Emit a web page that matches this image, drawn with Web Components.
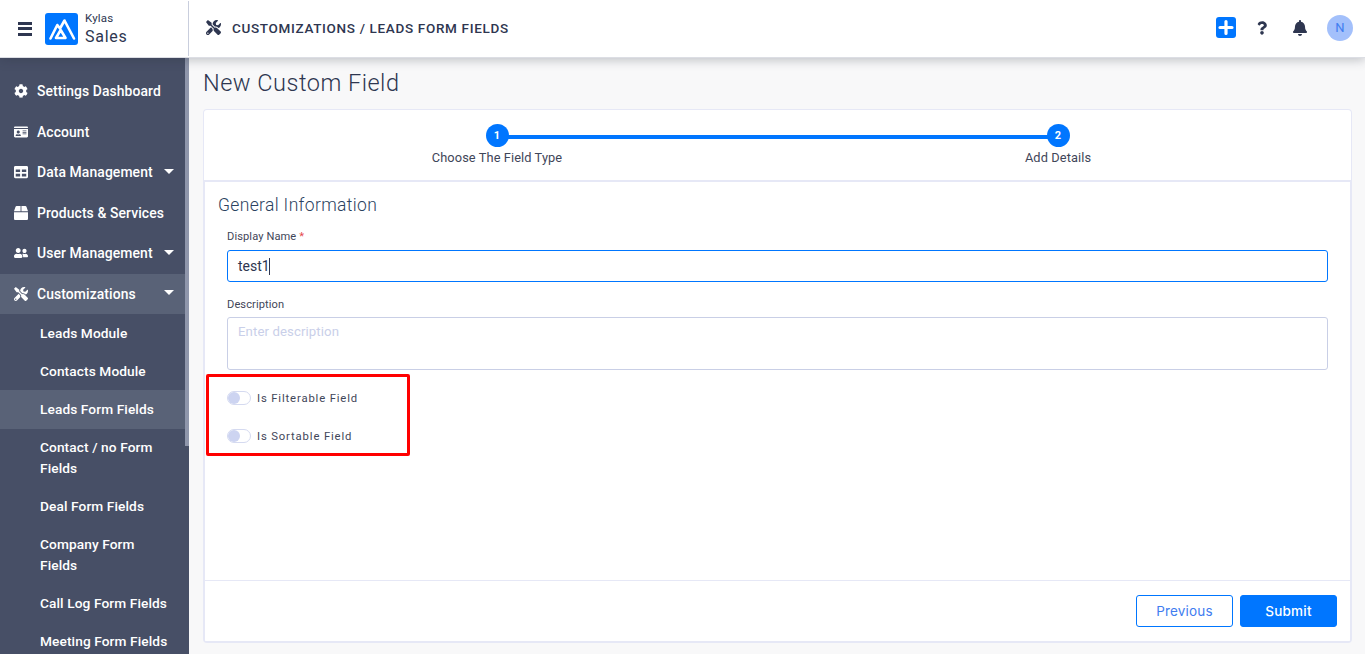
<!DOCTYPE html>
<html>
<head>
<meta charset="utf-8">
<title>New Custom Field</title>
<style>
  html, body { margin: 0; padding: 0; height: 100%; overflow: hidden; }
  body { font-family: Roboto, "Liberation Sans", sans-serif; background: #f8f8f9; }
</style>
</head>
<body>
<app-shell>
  <top-bar slot="top"></top-bar>
  <side-nav slot="side">
    <nav-item icon="gear" label="Settings Dashboard"></nav-item>
    <nav-item icon="card" label="Account"></nav-item>
    <nav-item icon="table" label="Data Management" caret></nav-item>
    <nav-item icon="box" label="Products &amp; Services"></nav-item>
    <nav-item icon="users" label="User Management" caret></nav-item>
    <nav-item icon="tools" label="Customizations" caret active></nav-item>
    <sub-item>Leads Module</sub-item>
    <sub-item>Contacts Module</sub-item>
    <sub-item active>Leads Form Fields</sub-item>
    <sub-item>Contact / no Form Fields</sub-item>
    <sub-item>Deal Form Fields</sub-item>
    <sub-item>Company Form Fields</sub-item>
    <sub-item>Call Log Form Fields</sub-item>
    <sub-item>Meeting Form Fields</sub-item>
  </side-nav>
  <field-page slot="main"></field-page>
</app-shell>

<script>
const ICONS = {
  gear: [512, 'M487.4 315.7l-42.6-24.6c4.3-23.2 4.3-47 0-70.2l42.6-24.6c4.9-2.8 7.1-8.6 5.5-14-11.1-35.6-30-67.8-54.7-94.6-3.8-4.1-10-5.1-14.8-2.3L380.8 110c-17.9-15.4-38.5-27.3-60.8-35.1V25.8c0-5.6-3.9-10.5-9.4-11.7-36.7-8.2-74.3-7.8-109.2 0-5.5 1.2-9.4 6.1-9.4 11.7V75c-22.2 7.9-42.8 19.8-60.8 35.1L88.7 85.5c-4.9-2.8-11-1.9-14.8 2.3-24.7 26.7-43.6 58.9-54.7 94.6-1.7 5.4.6 11.2 5.5 14L67.3 221c-4.3 23.2-4.3 47 0 70.2l-42.6 24.6c-4.9 2.8-7.1 8.6-5.5 14 11.1 35.6 30 67.8 54.7 94.6 3.8 4.1 10 5.1 14.8 2.3l42.6-24.6c17.9 15.4 38.5 27.3 60.8 35.1v49.2c0 5.6 3.9 10.5 9.4 11.7 36.7 8.2 74.3 7.8 109.2 0 5.5-1.2 9.4-6.1 9.4-11.7v-49.2c22.2-7.9 42.8-19.8 60.8-35.1l42.6 24.6c4.9 2.8 11 1.9 14.8-2.3 24.7-26.7 43.6-58.9 54.7-94.6 1.5-5.5-.7-11.3-5.6-14.1zM256 336c-44.1 0-80-35.9-80-80s35.9-80 80-80 80 35.9 80 80-35.9 80-80 80z'],
  card: [576, 'M528 32H48C21.5 32 0 53.5 0 80v16h576V80c0-26.5-21.500-48-48-48zM0 432c0 26.5 21.5 48 48 48h480c26.5 0 48-21.5 48-48V128H0v304zm352-232c0-4.4 3.6-8 8-8h144c4.4 0 8 3.600 8 8v16c0 4.4-3.6 8-8 8H360c-4.4 0-8-3.6-8-8v-16zm0 64c0-4.4 3.6-8 8-8h144c4.4 0 8 3.6 8 8v16c0 4.4-3.6 8-8 8H360c-4.4 0-8-3.6-8-8v-16zm0 64c0-4.4 3.6-8 8-8h144c4.4 0 8 3.6 8 8v16c0 4.4-3.6 8-8 8H360c-4.4 0-8-3.6-8-8v-16zM176 192c35.3 0 64 28.7 64 64s-28.7 64-64 64-64-28.7-64-64 28.7-64 64-64zM67.100 396.200C75.500 370.500 99.600 352 128 352h8.200c12.300 5.100 25.700 8 39.800 8s27.600-2.900 39.800-8h8.200c28.400 0 52.500 18.500 60.900 44.200 3.200 9.900-5.200 19.800-15.600 19.800H82.700c-10.400 0-18.800-10-15.600-19.800z'],
  table: [512, 'M464 32H48C21.490 32 0 53.490 0 80v352c0 26.510 21.490 48 48 48h416c26.510 0 48-21.490 48-48V80c0-26.510-21.490-48-48-48zM224 416H64v-96h160v96zm0-160H64v-96h160v96zm224 160H288v-96h160v96zm0-160H288v-96h160v96z'],
  box: [512, 'M509.500 184.600L458.900 32.800C452.400 13.200 434.100 0 413.400 0H272v192h238.700c-.4-2.500-.4-5-1.200-7.400zM240 0H98.600c-20.700 0-39 13.200-45.500 32.800L2.500 184.600c-.8 2.400-.8 4.900-1.200 7.400H240V0zM0 224v240c0 26.500 21.500 48 48 48h416c26.500 0 48-21.500 48-48V224H0z'],
  users: [640, 'M192 256c61.900 0 112-50.100 112-112S253.900 32 192 32 80 82.100 80 144s50.100 112 112 112zm76.800 32h-8.300c-20.800 10-43.900 16-68.500 16s-47.600-6-68.500-16h-8.300C51.600 288 0 339.600 0 403.200V432c0 26.500 21.500 48 48 48h288c26.500 0 48-21.500 48-48v-28.800c0-63.600-51.600-115.200-115.200-115.200zM480 256c53 0 96-43 96-96s-43-96-96-96-96 43-96 96 43 96 96 96zm48 32h-3.800c-13.900 4.800-28.600 8-44.200 8s-30.300-3.200-44.200-8H432c-20.400 0-39.200 5.900-55.700 15.400 24.400 26.300 39.700 61.200 39.700 99.800v38.400c0 2.200-.5 4.300-.6 6.400H592c26.500 0 48-21.500 48-48 0-61.900-50.100-112-112-112z'],
  tools: [512, 'M501.100 395.700L384 278.600c-23.100-23.100-57.600-27.600-85.400-13.900L192 158.100V96L64 0 0 64l96 128h62.100l106.600 106.600c-13.600 27.800-9.200 62.300 13.900 85.400l117.100 117.100c14.600 14.600 38.200 14.600 52.700 0l52.700-52.700c14.500-14.600 14.500-38.200 0-52.700zM331.700 225c28.300 0 54.900 11 74.900 31l19.400 19.400c15.800-6.900 30.800-16.500 43.800-29.500 37.100-37.100 49.700-89.300 37.900-136.700-2.200-9-13.500-12.100-20.100-5.500l-74.400 74.400-67.900-11.300L334 98.900l74.400-74.400c6.600-6.600 3.400-17.900-5.700-20.200-47.400-11.700-99.600.9-136.600 37.900-28.500 28.500-41.900 66.100-41.200 103.600l82.100 82.100c8.100-1.900 16.500-2.900 24.700-2.900zm-103.900 82l-56.700-56.700L18.700 402.800c-25 25-25 65.500 0 90.500s65.500 25 90.500 0l123.600-123.600c-7.600-19.900-9.900-41.600-5-62.700zM64 472c-13.200 0-24-10.800-24-24 0-13.300 10.700-24 24-24s24 10.700 24 24c0 13.200-10.700 24-24 24z'],
  bell: [448, 'M224 512c35.320 0 63.970-28.650 63.970-64H160.030c0 35.350 28.650 64 63.970 64zm215.390-149.710c-19.320-20.760-55.470-51.990-55.470-154.290 0-77.700-54.480-139.900-127.940-155.160V32c0-17.670-14.320-32-31.980-32s-31.980 14.330-31.980 32v20.840C118.560 68.100 64.080 130.300 64.080 208c0 102.300-36.150 133.530-55.470 154.290-6 6.450-8.660 14.160-8.610 21.710.11 16.400 12.980 32 32.100 32h383.800c19.120 0 32-15.600 32.100-32 .05-7.550-2.610-15.270-8.610-21.710z'],
  question: [384, 'M202.021 0C122.202 0 70.503 32.703 29.914 91.026c-7.363 10.580-5.093 25.086 5.178 32.874l43.138 32.709c10.373 7.865 25.132 6.026 33.253-4.148 25.049-31.381 43.630-49.449 82.757-49.449 30.764 0 68.816 19.799 68.816 49.631 0 22.552-18.617 34.134-48.993 51.164-35.423 19.860-82.299 44.576-82.299 106.405V320c0 13.255 10.745 24 24 24h72.471c13.255 0 24-10.745 24-24v-5.773c0-42.860 125.268-44.645 125.268-160.627C377.504 66.256 286.902 0 202.021 0zM192 373.459c-38.196 0-69.271 31.075-69.271 69.271 0 38.195 31.075 69.270 69.271 69.270s69.271-31.075 69.271-69.271-31.075-69.270-69.271-69.270z']
};

function icon(name, width, height, color) {
  const [w, d] = ICONS[name];
  return `<svg width="${width}" height="${height}" viewBox="0 0 ${w} 512" fill="${color}" style="display:block;flex:none"><path d="${d}"/></svg>`;
}

class AppShell extends HTMLElement {
  constructor() {
    super();
    this.attachShadow({ mode: "open" }).innerHTML = `
      <style>
        :host { display: grid; grid-template-columns: 189px 1fr; grid-template-rows: 58px 1fr; height: 654px; overflow: hidden; }
        .top { grid-column: 1 / 3; position: relative; z-index: 2; box-shadow: 0 2px 10px rgba(40, 45, 60, .28); }
        .side { overflow: hidden; min-height: 0; }
        .main { overflow: hidden; min-height: 0; }
      </style>
      <div class="top"><slot name="top"></slot></div>
      <div class="side"><slot name="side"></slot></div>
      <div class="main"><slot name="main"></slot></div>`;
  }
}

class TopBar extends HTMLElement {
  constructor() {
    super();
    this.attachShadow({ mode: "open" }).innerHTML = `
      <style>
        :host { display: flex; height: 58px; box-sizing: border-box; border-bottom: 1px solid #dcdee4; background: #fff; color: #2e3650; align-items: center; }
        .brand { width: 189px; height: 55px; border-right: 1px solid #c9cedd; display: flex; align-items: center; box-sizing: border-box; padding-left: 18px; }
        .burger { width: 14px; height: 14px; display: flex; flex-direction: column; justify-content: space-between; margin-right: 13px; }
        .burger i { height: 3px; background: #2e3650; display: block; }
        .logo { width: 33px; height: 32px; border-radius: 3px; background: #0076ff; margin-right: 7px; flex: none; }
        .names { display: flex; flex-direction: column; }
        .kylas { font-size: 11.500px; line-height: 14px; letter-spacing: .2px; }
        .sales { font-size: 16px; line-height: 21px; letter-spacing: .75px; font-weight: 400; color: #2e3650; margin-top: 1px; }
        .crumb { display: flex; align-items: center; margin-left: 17px; margin-top: -2px; font-size: 13.500px; font-weight: 500; letter-spacing: .67px; flex: 1; }
        .crumb span { margin-left: 11px; }
        .acts { display: flex; align-items: center; margin-right: 12px; margin-top: -2px; }
        .plus { width: 20px; height: 21px; background: #0076ff; border-radius: 3px; margin-right: 21px; }
        .acts > svg:nth-child(2) { margin-right: 26px; }
        .acts > svg:nth-child(3) { margin-right: 20px; }
        .av { width: 26px; height: 26px; border-radius: 50%; background: #a3c0fb; color: #3f7df0; font-size: 13px; display: flex; align-items: center; justify-content: center; }
      </style>
      <div class="brand">
        <div class="burger"><i></i><i></i><i></i></div>
        <svg class="logo" viewBox="0 0 33 32" fill="none" stroke="#fff" stroke-width="2.600" stroke-linejoin="round" stroke-linecap="round">
          <path d="M5.500 25.500 12.300 12 15 15.500 19.500 7.500 29 25.500M11 25 15.700 17 20.500 25z"/>
        </svg>
        <div class="names"><span class="kylas">Kylas</span><span class="sales">Sales</span></div>
      </div>
      <div class="crumb">${icon("tools", 15, 15, "#2e3650")}<span>CUSTOMIZATIONS / LEADS FORM FIELDS</span></div>
      <div class="acts">
        <svg class="plus" viewBox="0 0 20 21"><path d="M10 4.500v12M4 10.500h12" stroke="#fff" stroke-width="3.200" stroke-linecap="round"/></svg>
        ${icon("question", 10, 14, "#2e3650")}
        ${icon("bell", 14, 16, "#2e3650")}
        <div class="av">N</div>
      </div>`;
  }
}

class SideNav extends HTMLElement {
  constructor() {
    super();
    this.attachShadow({ mode: "open" }).innerHTML = `
      <style>
        :host { display: flex; background: #474f66; height: 596px; overflow: hidden; }
        .list { width: 185px; padding-top: 12.700px; flex: none; }
        .bar { width: 4px; flex: none; }
        .thumb { height: 388px; background: #8f96ab; }
      </style>
      <div class="list"><slot></slot></div>
      <div class="bar"><div class="thumb"></div></div>`;
  }
}

class NavItem extends HTMLElement {
  constructor() {
    super();
    const caret = this.hasAttribute("caret") ? '<i class="caret"></i>' : "";
    this.attachShadow({ mode: "open" }).innerHTML = `
      <style>
        :host { display: flex; align-items: center; height: 40.600px; padding-left: 14px; color: #fff; font-size: 13.900px; font-weight: 500; box-sizing: border-box; letter-spacing: .1px; }
        :host([active]) { background: #596277; }
        span { margin-left: 9px; flex: 1; white-space: nowrap; }
        .caret { width: 0; height: 0; border: 5px solid transparent; border-top: 5px solid #fff; border-bottom: 0; margin-right: 11px; margin-top: -2px; border-left-width: 5.500px; border-right-width: 5.500px; }
      </style>
      ${icon(this.getAttribute("icon"), 14, 14, "#fff")}
      <span>${this.getAttribute("label").replace("&", "&amp;")}</span>${caret}`;
  }
}

class SubItem extends HTMLElement {
  constructor() {
    super();
    this.attachShadow({ mode: "open" }).innerHTML = `
      <style>
        :host { display: block; padding: 8.500px 14px 8.500px 40px; color: #fff; font-size: 13.700px; line-height: 21px; font-weight: 500; letter-spacing: .1px; }
        :host([active]) { background: #596277; padding-top: 9px; padding-bottom: 9px; margin-bottom: -1px; }
      </style>
      <slot></slot>`;
  }
}

class StepDot extends HTMLElement {
  constructor() {
    super();
    this.attachShadow({ mode: "open" }).innerHTML = `
      <style>
        :host { display: flex; flex-direction: column; align-items: center; width: 200px; font-size: 12.800px; color: #3f4659; letter-spacing: .1px; }
        .dot { width: 23px; height: 23px; border-radius: 50%; background: #0076ff; color: #fff; font-size: 11px; font-weight: 700; display: flex; align-items: center; justify-content: center; margin-bottom: 3px; }
      </style>
      <div class="dot">${this.getAttribute("n")}</div><slot></slot>`;
  }
}

class FormField extends HTMLElement {
  constructor() {
    super();
    this.attachShadow({ mode: "open" }).innerHTML = `
      <style>
        :host { display: block; margin: 0 22px 0 22px; }
        label { display: block; font-size: 11.100px; line-height: 14px; color: #3f4659; margin-bottom: 6px; letter-spacing: .1px; }
        :host([area]) label { margin-bottom: 5px; }
        b { color: #e5484d; font-weight: 400; }
        .box { box-sizing: border-box; border: 1px solid #c9cfe6; border-radius: 3px; padding: 0 10px; font-size: 14px; }
        :host([focus]) .box { border-color: #0076ff; height: 32px; display: flex; align-items: center; color: #2e3650; }
        :host([area]) .box { height: 53px; padding-top: 6px; color: #c9cfe9; font-size: 13.200px; line-height: 16px; letter-spacing: .1px; }
        .cursor { width: 1px; height: 17px; background: #2e3650; margin-left: -1px; }
      </style>
      <label>${this.getAttribute("label")}${this.hasAttribute("req") ? " <b>*</b>" : ""}</label>
      <div class="box"><slot></slot>${this.hasAttribute("focus") ? '<i class="cursor"></i>' : ""}</div>`;
  }
}

class ToggleRow extends HTMLElement {
  constructor() {
    super();
    this.attachShadow({ mode: "open" }).innerHTML = `
      <style>
        :host { display: flex; align-items: center; height: 38px; font-size: 11.300px; color: #3f4659; letter-spacing: .85px; }
        .sw { width: 24px; height: 14px; border: 1px solid #d5daf0; border-radius: 8px; box-sizing: border-box; margin-right: 6px; background: #fff; display: flex; align-items: center; }
        .sw i { width: 12px; height: 12px; border-radius: 50%; background: #cdd4f1; display: block; }
      </style>
      <div class="sw"><i></i></div><slot></slot>`;
  }
}

class FieldPage extends HTMLElement {
  constructor() {
    super();
    this.attachShadow({ mode: "open" }).innerHTML = `
      <style>
        :host { display: flex; flex-direction: column; height: 596px; box-sizing: border-box; padding: 11px 13px 11px 14px; color: #2e3650; }
        h1 { margin: 0; font-size: 23.500px; line-height: 28px; font-weight: 300; letter-spacing: .5px; height: 40px; }
        .card { flex: 1; background: #fff; border: 1px solid #e6e8f6; border-bottom-width: 2px; border-radius: 4px; display: flex; flex-direction: column; min-height: 0; }
        .stepper { height: 72px; flex: none; position: relative; display: flex; justify-content: space-between; box-sizing: border-box; padding: 14px 193px 0 193px; border-bottom: 2px solid #e6e8f6; }
        .line { position: absolute; left: 293px; right: 293px; top: 25px; height: 4px; background: #0076ff; }
        step-dot { position: relative; }
        .body { flex: 1; position: relative; border-left: 1px solid #e6e8f6; border-right: 1px solid #e6e8f6; padding-top: 12px; }
        h2 { margin: 0 0 14px 13px; font-size: 17.500px; line-height: 22px; font-weight: 300; letter-spacing: .35px; color: #2b4260; }
        form-field + form-field { margin-top: 16px; }
        .toggles { margin: 9px 0 0 22px; }
        .mark { position: absolute; left: 1px; top: 192px; width: 204px; height: 82px; box-sizing: border-box; border: 3px solid #f00; border-radius: 2px; }
        .foot { height: 61px; flex: none; box-sizing: border-box; border-top: 1px solid #e6e8f6; display: flex; justify-content: flex-end; align-items: flex-start; gap: 7px; padding: 14px 13px 0 0; border-left: 1px solid #e6e8f6; border-right: 1px solid #e6e8f6; }
        .btn { box-sizing: border-box; width: 97px; height: 32px; border-radius: 3px; border: 1px solid #0076ff; font-size: 13.500px; display: flex; align-items: center; justify-content: center; font-family: Inter, sans-serif; letter-spacing: .2px; }
        .prev { color: #3f7df0; background: #fff; }
        .sub { color: #fff; background: #0076ff; font-weight: 500; }
      </style>
      <h1>New Custom Field</h1>
      <div class="card">
        <div class="stepper">
          <div class="line"></div>
          <step-dot n="1">Choose The Field Type</step-dot>
          <step-dot n="2">Add Details</step-dot>
        </div>
        <div class="body">
          <h2>General Information</h2>
          <form-field label="Display Name" req focus>test1</form-field>
          <form-field label="Description" area>Enter description</form-field>
          <div class="toggles">
            <toggle-row>Is Filterable Field</toggle-row>
            <toggle-row>Is Sortable Field</toggle-row>
          </div>
          <div class="mark"></div>
        </div>
        <div class="foot">
          <div class="btn prev">Previous</div>
          <div class="btn sub">Submit</div>
        </div>
      </div>`;
  }
}

customElements.define("app-shell", AppShell);
customElements.define("top-bar", TopBar);
customElements.define("side-nav", SideNav);
customElements.define("nav-item", NavItem);
customElements.define("sub-item", SubItem);
customElements.define("step-dot", StepDot);
customElements.define("form-field", FormField);
customElements.define("toggle-row", ToggleRow);
customElements.define("field-page", FieldPage);
</script>
</body>
</html>
